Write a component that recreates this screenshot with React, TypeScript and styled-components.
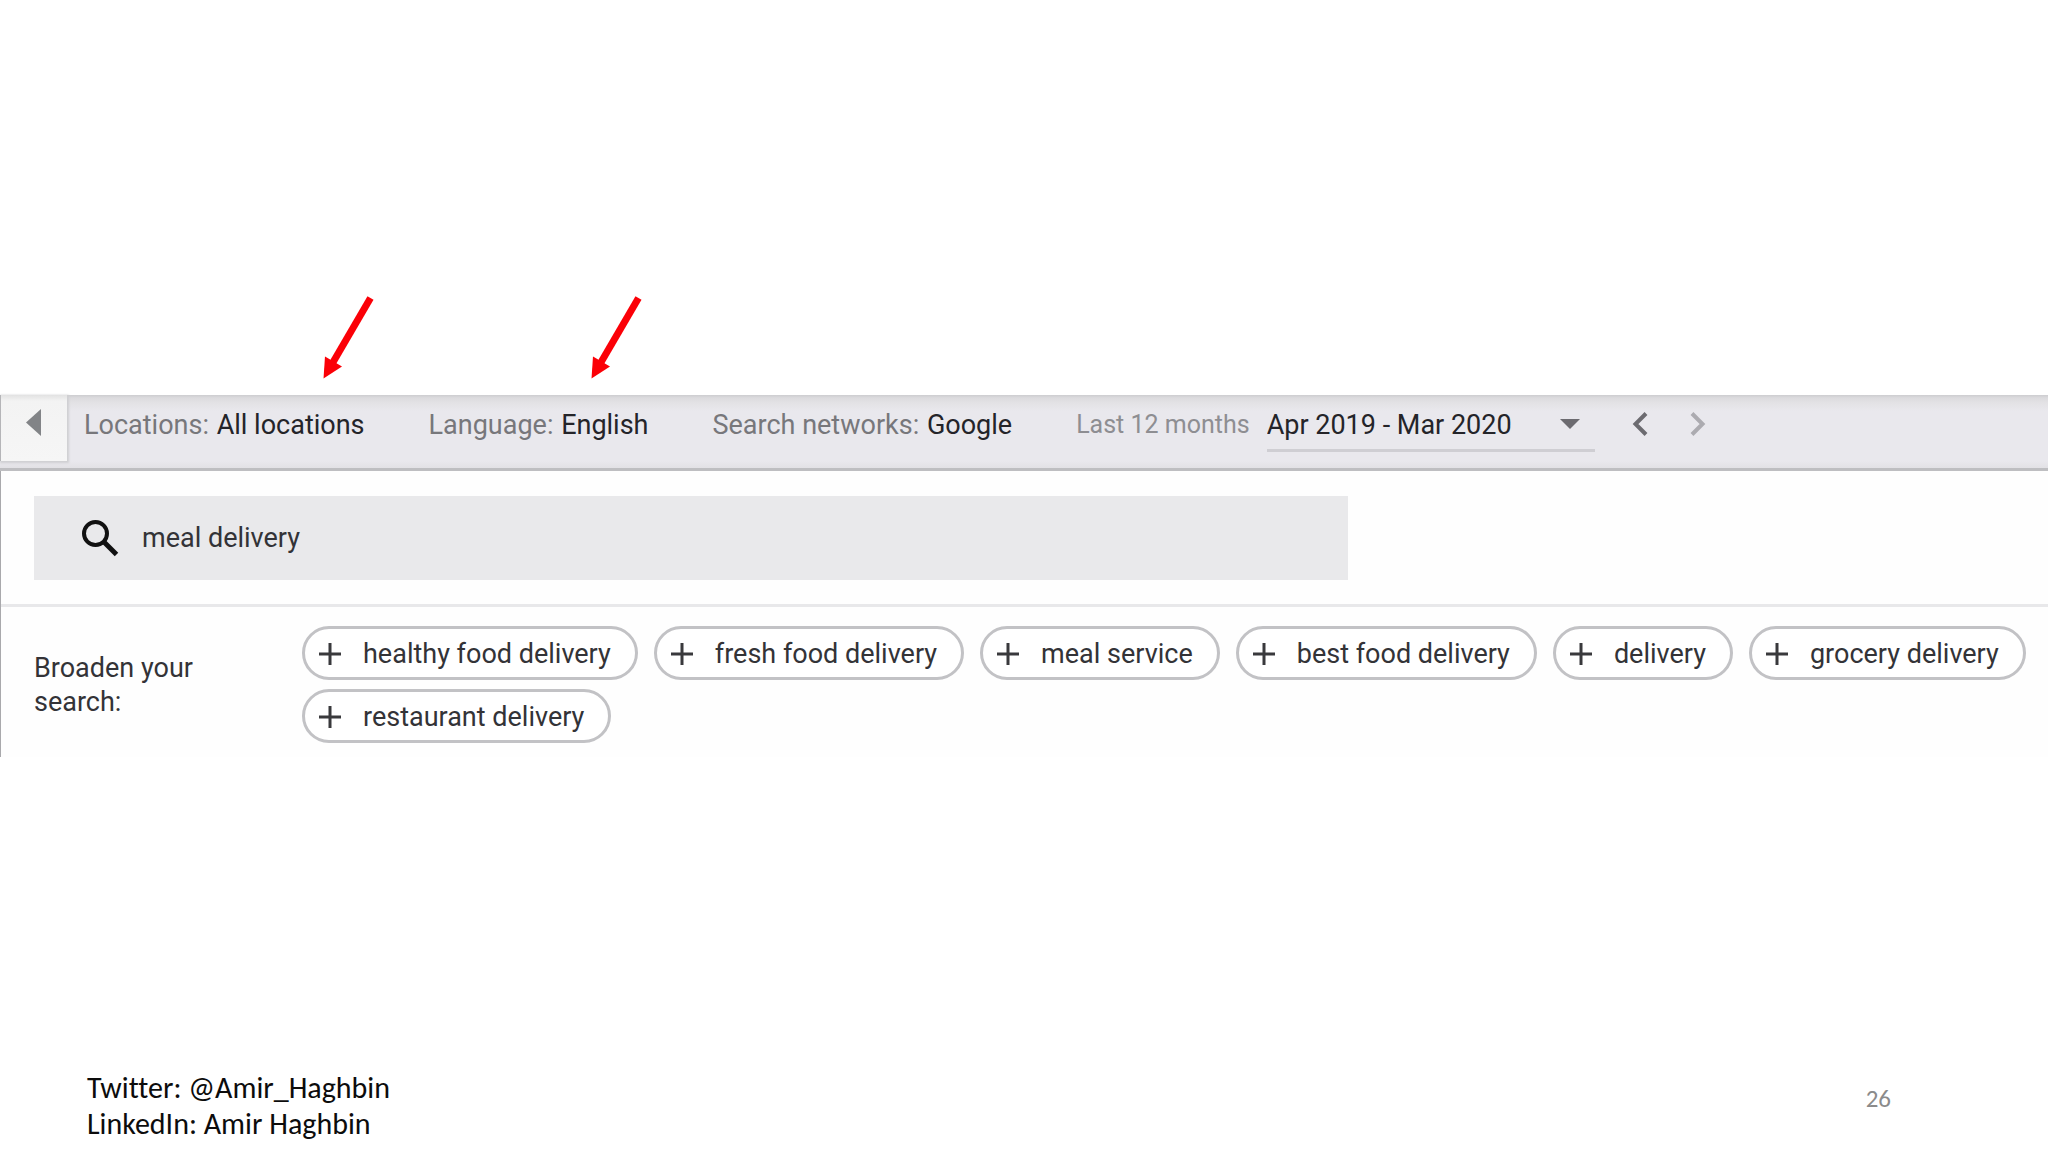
import React, { useState } from "react";
import styled, { createGlobalStyle } from "styled-components";

const GlobalStyle = createGlobalStyle`
  *, *::before, *::after { box-sizing: border-box; }
  body { margin: 0; background: #fff; }
  button, input, select { font: inherit; color: inherit; }
`;

const Slide = styled.div`
  display: flex;
  flex-direction: column;
  min-height: 100vh;
  padding-top: 395px;
  background: #fff;
  font-family: Roboto, "Liberation Sans", sans-serif;
  font-size: 27px;
  line-height: 34px;
  color: #333337;
`;

const Planner = styled.main`
  position: relative;
`;

const Arrow = styled.svg<{ $left: number }>`
  position: absolute;
  top: -100px;
  left: ${(p) => p.$left}px;
  width: 52px;
  height: 84px;
`;

const Toolbar = styled.div`
  display: flex;
  align-items: flex-start;
  height: 76px;
  border-bottom: 3px solid #bebec1;
  background: linear-gradient(#cdcdd0 0, #dcdbde 3px, #e3e2e5 8px, #e9e8ed 16px, #e9e8ed 66px, #e2e1e5 100%);
`;

const BackButton = styled.button`
  display: flex;
  align-items: center;
  justify-content: center;
  flex: none;
  width: 67px;
  height: 66px;
  padding: 0 2px 12px 0;
  border: 0;
  border-left: 1px solid #b5b5b8;
  background: linear-gradient(#e2e2e2 0, #f3f3f3 6px, #f6f6f6 100%);
  box-shadow: 1px 1px 2px 1px #cfcfd2;
`;

const Filters = styled.div`
  display: flex;
  align-items: center;
  gap: 64px;
  padding: 3px 0 0 17px;
  white-space: nowrap;
`;

const FilterButton = styled.button`
  padding: 0;
  border: 0;
  background: none;
  color: #77777b;
`;

const FilterValue = styled.span`
  margin-left: 1px;
  color: #242429;
`;

const DateRange = styled.div`
  display: flex;
  align-items: center;
  gap: 17px;
`;

const DateLabel = styled.label`
  font-size: 25px;
  color: #8e8e92;
`;

const SelectBox = styled.div`
  display: grid;
  align-items: center;
  width: 328px;
  height: 54px;
  border-bottom: 3px solid #cfced3;

  > * { grid-area: 1 / 1; }
  > svg { justify-self: end; margin-right: 15px; pointer-events: none; }
`;

const DateSelect = styled.select`
  appearance: none;
  width: 100%;
  padding: 2px 0 0;
  border: 0;
  background: none;
  color: #242429;
`;

const Stepper = styled.div`
  display: flex;
  gap: 28px;
  padding: 3px 0 0 30px;
`;

const StepButton = styled.button`
  display: flex;
  align-items: center;
  justify-content: center;
  width: 30px;
  height: 52px;
  padding: 0;
  border: 0;
  background: none;
  color: #6c6b70;

  &:disabled { color: #acabb0; }
`;

const Panel = styled.div`
  border-left: 1px solid #a9a9ac;
  background: #fefefe;
`;

const SearchSection = styled.div`
  padding: 25px 34px 24px 33px;
  border-bottom: 3px solid #e8e8ea;
`;

const SearchField = styled.label`
  display: flex;
  align-items: center;
  gap: 23px;
  width: 100%;
  max-width: 1314px;
  height: 84px;
  padding: 0 47px;
  background: #e9e9eb;
`;

const SearchInput = styled.input`
  flex: 1;
  min-width: 0;
  padding: 0;
  border: 0;
  outline: 0;
  background: none;
`;

const BroadenSection = styled.section`
  display: flex;
  align-items: center;
  padding: 19px 17px 14px 33px;
`;

const BroadenTitle = styled.h2`
  flex: none;
  width: 268px;
  margin: 0;
  padding-right: 60px;
  font-size: inherit;
  font-weight: 400;
`;

const Chips = styled.div`
  display: flex;
  flex-wrap: wrap;
  gap: 9px 16px;
`;

const Chip = styled.button`
  display: flex;
  align-items: center;
  gap: 22px;
  height: 54px;
  padding: 2px 24px 0 14px;
  border: 3px solid #c2c2c5;
  border-radius: 27px;
  background: #fff;
  white-space: nowrap;
`;

const Footer = styled.footer`
  display: flex;
  align-items: center;
  justify-content: space-between;
  margin-top: auto;
  padding: 0 157px 10px 87px;
  font-family: Carlito, Calibri, Lato, sans-serif;
  font-size: 30px;
  font-variant-ligatures: none;
  line-height: 36px;
  color: #0c0c0c;
`;

const Contact = styled.address`
  font-style: normal;
`;

const PageNumber = styled.span`
  padding-bottom: 14px;
  font-size: 25px;
  color: #8b8b8b;
`;

const ideas = [
  "healthy food delivery",
  "fresh food delivery",
  "meal service",
  "best food delivery",
  "delivery",
  "grocery delivery",
  "restaurant delivery",
];

const filters = [
  { name: "Locations", value: "All locations" },
  { name: "Language", value: "English" },
  { name: "Search networks", value: "Google" },
];

function PointerArrow({ left }: { left: number }) {
  return (
    <Arrow $left={left} viewBox="0 0 52 84" aria-hidden="true">
      <path d="M48.500 3 10 69" stroke="#fb0007" strokeWidth="7" />
      <path d="M1.500 83.500 3 61.500 20 71.500Z" fill="#fb0007" />
    </Arrow>
  );
}

function PlusIcon() {
  return (
    <svg width="22" height="22" viewBox="0 0 22 22" aria-hidden="true">
      <path d="M11 0V22M0 11H22" stroke="#39393c" strokeWidth="3" />
    </svg>
  );
}

export default function App() {
  const [query, setQuery] = useState("meal delivery");

  return (
    <>
      <GlobalStyle />
      <Slide>
        <Planner>
          <PointerArrow left={322} />
          <PointerArrow left={590} />
          <Toolbar>
            <BackButton type="button" aria-label="Back">
              <svg width="15" height="27" viewBox="0 0 15 27" aria-hidden="true">
                <path d="M15 0V27L0 13.500Z" fill="#828487" />
              </svg>
            </BackButton>
            <Filters>
              {filters.map((f) => (
                <FilterButton type="button" key={f.name}>
                  {f.name}: <FilterValue>{f.value}</FilterValue>
                </FilterButton>
              ))}
              <DateRange>
                <DateLabel htmlFor="range">Last 12 months</DateLabel>
                <SelectBox>
                  <DateSelect id="range">
                    <option>Apr 2019 - Mar 2020</option>
                  </DateSelect>
                  <svg width="20" height="10" viewBox="0 0 20 10" aria-hidden="true">
                    <path d="M0 0H20L10 10Z" fill="#6c6b70" />
                  </svg>
                </SelectBox>
              </DateRange>
            </Filters>
            <Stepper>
              <StepButton type="button" aria-label="Previous period">
                <svg width="16" height="26" viewBox="0 0 16 26" aria-hidden="true">
                  <path d="M14 2.500 3.500 13 14 23.500" fill="none" stroke="currentColor" strokeWidth="4" />
                </svg>
              </StepButton>
              <StepButton type="button" aria-label="Next period" disabled>
                <svg width="16" height="26" viewBox="0 0 16 26" aria-hidden="true">
                  <path d="M2 2.500 12.500 13 2 23.500" fill="none" stroke="currentColor" strokeWidth="4" />
                </svg>
              </StepButton>
            </Stepper>
          </Toolbar>
          <Panel>
            <SearchSection>
              <SearchField>
                <svg width="38" height="38" viewBox="0 0 38 38" aria-hidden="true">
                  <circle cx="14.500" cy="14.500" r="11.500" fill="none" stroke="#111" strokeWidth="4" />
                  <path d="M22.500 22.500 35.500 35.500" stroke="#111" strokeWidth="5" />
                </svg>
                <SearchInput
                  type="text"
                  aria-label="Search keywords"
                  value={query}
                  onChange={(e) => setQuery(e.target.value)}
                />
              </SearchField>
            </SearchSection>
            <BroadenSection>
              <BroadenTitle>Broaden your search:</BroadenTitle>
              <Chips>
                {ideas.map((idea) => (
                  <Chip type="button" key={idea}>
                    <PlusIcon />
                    {idea}
                  </Chip>
                ))}
              </Chips>
            </BroadenSection>
          </Panel>
        </Planner>
        <Footer>
          <Contact>
            Twitter: @Amir_Haghbin
            <br />
            LinkedIn: Amir Haghbin
          </Contact>
          <PageNumber>26</PageNumber>
        </Footer>
      </Slide>
    </>
  );
}
